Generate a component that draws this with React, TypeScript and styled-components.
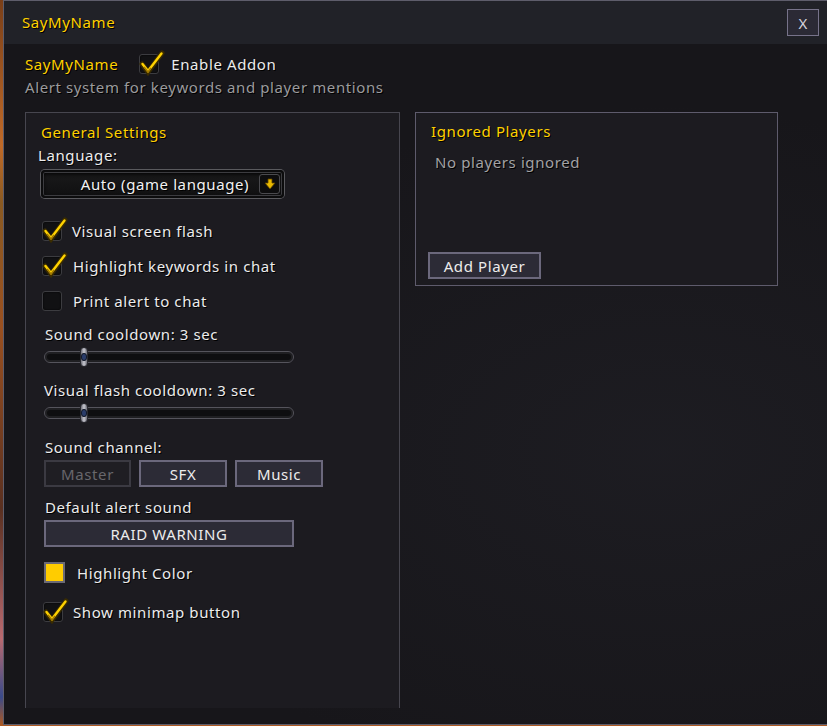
import React from 'react';
import styled, { createGlobalStyle } from 'styled-components';

const Global = createGlobalStyle`
  html, body { margin: 0; padding: 0; }
  body {
    width: 827px;
    height: 726px;
    overflow: hidden;
    background: linear-gradient(180deg, #7a3f18 0%, #c06a28 20%, #8a5a22 28%, #9a5020 45%, #5a3020 70%, #b86a70 88%, #3a4a8a 96%, #b05a20 100%);
    font-family: "Noto Sans", "Open Sans", sans-serif;
    letter-spacing: 0.6px;
  }
`;

const Window = styled.div`
  margin-left: 3px;
  width: 824px;
  height: 725px;
  box-sizing: border-box;
  border: 1px solid #5e5d6b;
  border-right: none;
  background: #17161a;
  display: flex;
  flex-direction: column;
`;

const TitleBar = styled.div`
  height: 43px;
  flex: none;
  box-sizing: border-box;
  background: #212228;
  display: flex;
  align-items: center;
  justify-content: space-between;
  padding: 0 8px 2px 18px;
`;

const Gold = styled.span<{ $size?: number }>`
  color: #ffd100;
  font-size: ${p => p.$size ?? 15}px;
  text-shadow: 1px 1px 0 #000;
  white-space: nowrap;
`;

const CloseButton = styled.div`
  width: 32px;
  height: 27px;
  margin-top: 2px;
  box-sizing: border-box;
  border: 1px solid #77738a;
  background: #2b2a35;
  color: #d4d2dc;
  font-size: 15px;
  letter-spacing: 0;
  display: flex;
  align-items: center;
  justify-content: center;
`;

const Content = styled.div`
  flex: 1;
  padding: 9px 0 0 21px;
  display: flex;
  flex-direction: column;
  background:
    radial-gradient(ellipse at 80% 60%, rgba(40, 40, 48, 0.35), transparent 60%),
    #17161a;
`;

const HeaderRow = styled.div`
  display: flex;
  align-items: center;
  gap: 21px;
  height: 21px;
`;

const Subtitle = styled.div`
  color: #9b9b9d;
  font-size: 15px;
  line-height: 18px;
  margin-top: 4px;
  text-shadow: 1px 1px 0 #000;
`;

const Panels = styled.div`
  display: flex;
  gap: 15px;
  margin-top: 16px;
  align-items: flex-start;
`;

const Panel = styled.div<{ $w: number; $h: number; $border: string; $noBottom?: boolean }>`
  width: ${p => p.$w}px;
  height: ${p => p.$h}px;
  box-sizing: border-box;
  border: 1px solid ${p => p.$border};
  ${p => (p.$noBottom ? 'border-bottom: none;' : '')}
  background: #1c1b20;
  display: flex;
  flex-direction: column;
`;

const Item = styled.div<{ $indent: number; $top: number; $h?: number }>`
  margin-left: ${p => p.$indent}px;
  margin-top: ${p => p.$top}px;
  ${p => (p.$h ? `height: ${p.$h}px;` : '')}
  display: flex;
  align-items: center;
  flex: none;
`;

const Label = styled.span<{ $color?: string }>`
  color: ${p => p.$color ?? '#ececec'};
  font-size: 15px;
  line-height: 20px;
  text-shadow: 1px 1px 0 #000;
  white-space: nowrap;
`;

const CheckRowWrap = styled.div<{ $gap: number }>`
  display: flex;
  align-items: center;
  gap: ${p => p.$gap}px;
`;

const Box = styled.div`
  position: relative;
  width: 20px;
  height: 20px;
  box-sizing: border-box;
  border: 1px solid #3c3c40;
  border-radius: 3px;
  background: #111113;
  box-shadow: inset 0 0 2px #000;
  flex: none;
`;

const CheckSvg = styled.svg`
  position: absolute;
  left: -1px;
  top: -4px;
  width: 25px;
  height: 25px;
  overflow: visible;
`;

const Check = () => (
  <CheckSvg viewBox="0 0 25 25">
    <path d="M3 13 L9 21 L23 2" fill="none" stroke="#3a2c00" strokeWidth="5" strokeLinejoin="miter" strokeLinecap="round" />
    <path d="M3.5 13 L9 20 L22.5 2.5" fill="none" stroke="#ffd200" strokeWidth="2.4" strokeLinejoin="miter" strokeLinecap="round" />
    <path d="M5 16 L9 21 L12 17" fill="none" stroke="#a07800" strokeWidth="1.4" />
  </CheckSvg>
);

const CheckRow = ({ checked, label, gap = 10 }: { checked: boolean; label: string; gap?: number }) => (
  <CheckRowWrap $gap={gap}>
    <Box>{checked && <Check />}</Box>
    <Label>{label}</Label>
  </CheckRowWrap>
);

const Dropdown = styled.div`
  position: relative;
  width: 243px;
  height: 28px;
  box-sizing: border-box;
  border-radius: 4px;
  border: 2px solid #0c0c0d;
  box-shadow: 0 0 0 1px #5a5a5e, inset 0 0 0 1px #3c3c40, inset 0 2px 4px #000;
  background: linear-gradient(180deg, #1a1a1b 0%, #101011 100%);
  display: flex;
  align-items: center;
`;

const DropText = styled.span`
  flex: 1;
  text-align: center;
  color: #f2f2f2;
  font-size: 15px;
  text-shadow: 1px 1px 0 #000;
  padding-left: 28px;
`;

const DropArrow = styled.div`
  width: 21px;
  height: 20px;
  margin-right: 2px;
  box-sizing: border-box;
  border: 1px solid #4a4a4e;
  border-radius: 3px;
  background: #0d0d0e;
  display: flex;
  align-items: center;
  justify-content: center;
`;

const Slider = styled.div`
  position: relative;
  width: 250px;
  height: 20px;
`;

const Rail = styled.div`
  position: absolute;
  left: 0;
  right: 0;
  top: 4px;
  height: 12px;
  box-sizing: border-box;
  border: 1px solid #55545c;
  border-radius: 6px;
  background: #0e0e10;
  box-shadow: inset 0 0 0 2px #1f1f22;
`;

const Thumb = styled.div<{ $pos: number }>`
  position: absolute;
  left: ${p => p.$pos}px;
  top: 0;
  width: 8px;
  height: 20px;
  box-sizing: border-box;
  border-radius: 4px;
  border: 1px solid #2a2a30;
  background: linear-gradient(90deg, #6e6e78, #c8c8d0 50%, #6e6e78);
  display: flex;
  align-items: center;
  justify-content: center;
  &::after {
    content: '';
    width: 5px;
    height: 6px;
    border-radius: 50%;
    background: #2a3c6a;
    border: 1px solid #101828;
  }
`;

const ButtonRow = styled.div`
  display: flex;
  gap: 8px;
`;

const Button = styled.div<{ $w: number; $disabled?: boolean }>`
  width: ${p => p.$w}px;
  height: 27px;
  box-sizing: border-box;
  border: 2px solid ${p => (p.$disabled ? '#3b3a42' : '#6b687c')};
  background: ${p => (p.$disabled ? '#1f1e23' : '#2c2b36')};
  color: ${p => (p.$disabled ? '#68676c' : '#ececec')};
  font-size: 15px;
  display: flex;
  align-items: center;
  justify-content: center;
  white-space: nowrap;
`;

const Swatch = styled.div<{ $color: string }>`
  width: 21px;
  height: 21px;
  box-sizing: border-box;
  border: 2px solid #6b6a75;
  background: ${p => p.$color};
  flex: none;
`;

const Spacer = styled.div`
  flex: 1;
`;

export default function App() {
  return (
    <>
      <Global />
      <Window>
        <TitleBar>
          <Gold>SayMyName</Gold>
          <CloseButton>X</CloseButton>
        </TitleBar>
        <Content>
          <HeaderRow>
            <Gold>SayMyName</Gold>
            <CheckRow checked label="Enable Addon" gap={12} />
          </HeaderRow>
          <Subtitle>Alert system for keywords and player mentions</Subtitle>
          <Panels>
            <Panel $w={375} $h={596} $border="#47464f" $noBottom>
              <Item $indent={15} $top={9}><Gold>General Settings</Gold></Item>
              <Item $indent={12} $top={3}><Label>Language:</Label></Item>
              <Item $indent={15} $top={5}>
                <Dropdown>
                  <DropText>Auto (game language)</DropText>
                  <DropArrow>
                    <svg width="12" height="12" viewBox="0 0 12 12">
                      <path d="M4 1 H8 V5 H11 L6 11 L1 5 H4 Z" fill="#e8b800" stroke="#5a4200" strokeWidth="0.8" />
                    </svg>
                  </DropArrow>
                </Dropdown>
              </Item>
              <Item $indent={16} $top={22} $h={21}><CheckRow checked label="Visual screen flash" /></Item>
              <Item $indent={16} $top={14} $h={21}><CheckRow checked label="Highlight keywords in chat" gap={11} /></Item>
              <Item $indent={16} $top={14} $h={21}><CheckRow checked={false} label="Print alert to chat" gap={11} /></Item>
              <Item $indent={19} $top={13}><Label>Sound cooldown: 3 sec</Label></Item>
              <Item $indent={18} $top={3}>
                <Slider><Rail /><Thumb $pos={36} /></Slider>
              </Item>
              <Item $indent={18} $top={13}><Label>Visual flash cooldown: 3 sec</Label></Item>
              <Item $indent={18} $top={3}>
                <Slider><Rail /><Thumb $pos={36} /></Slider>
              </Item>
              <Item $indent={19} $top={14}><Label>Sound channel:</Label></Item>
              <Item $indent={18} $top={3}>
                <ButtonRow>
                  <Button $w={87} $disabled>Master</Button>
                  <Button $w={88}>SFX</Button>
                  <Button $w={88}>Music</Button>
                </ButtonRow>
              </Item>
              <Item $indent={19} $top={10}><Label>Default alert sound</Label></Item>
              <Item $indent={18} $top={3}><Button $w={250}>RAID WARNING</Button></Item>
              <Item $indent={18} $top={15} $h={21}>
                <CheckRowWrap $gap={12}>
                  <Swatch $color="#ffcc00" />
                  <Label>Highlight Color</Label>
                </CheckRowWrap>
              </Item>
              <Item $indent={17} $top={19} $h={20}><CheckRow checked label="Show minimap button" /></Item>
            </Panel>
            <Panel $w={363} $h={174} $border="#5e5b6c">
              <Item $indent={15} $top={8}><Gold>Ignored Players</Gold></Item>
              <Item $indent={19} $top={11}><Label $color="#a2a2a4">No players ignored</Label></Item>
              <Spacer />
              <Item $indent={12} $top={0}><Button $w={113}>Add Player</Button></Item>
              <Item $indent={0} $top={6} />
            </Panel>
          </Panels>
        </Content>
      </Window>
    </>
  );
}
